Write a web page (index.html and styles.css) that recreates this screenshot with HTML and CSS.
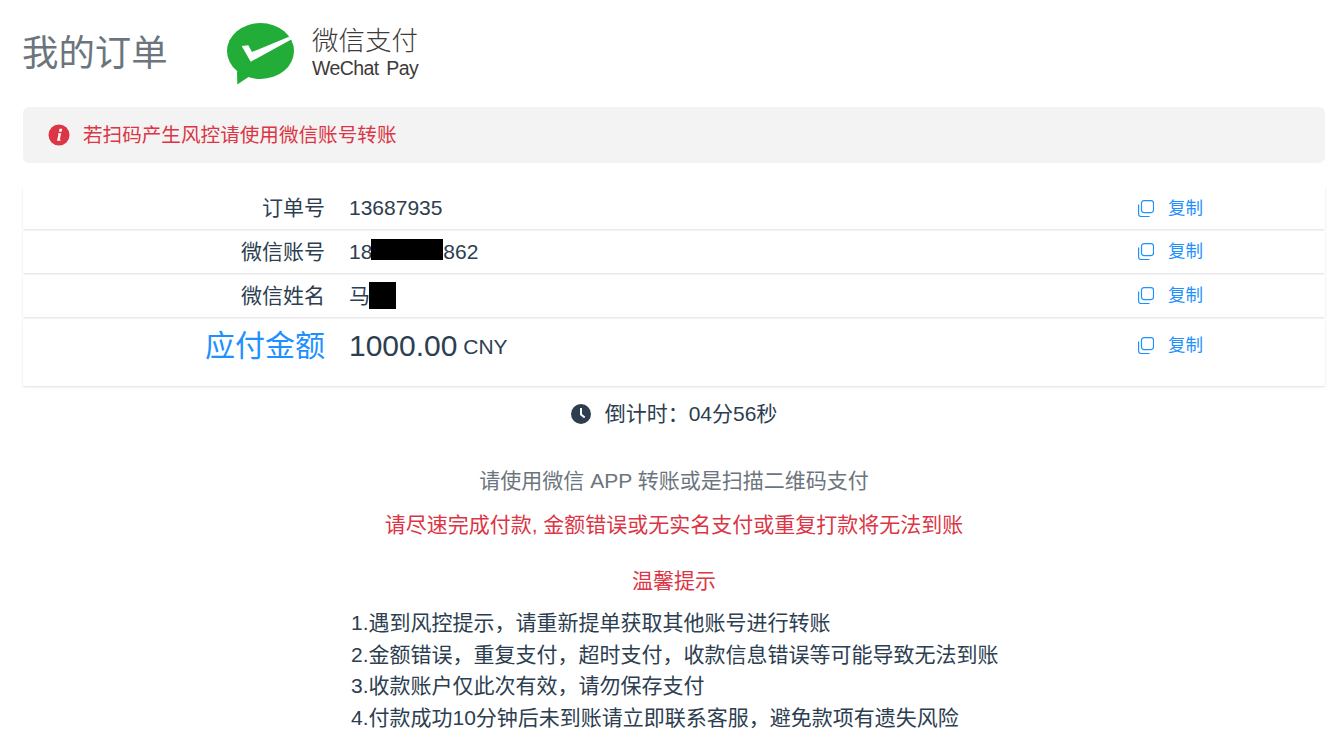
FILE: index.html
```html
<!DOCTYPE html>
<html lang="zh-CN">
<head>
<meta charset="utf-8">
<title>我的订单</title>
<link rel="stylesheet" href="styles.css">
</head>
<body>
<main class="page">
  <header class="head">
    <h1 class="title">我的订单</h1>
    <div class="brand">
      <svg class="brand-icon" viewBox="0 0 70 62" width="70" height="62" aria-hidden="true">
        <ellipse cx="34.500" cy="28" rx="33.500" ry="28" fill="#22ac38"/>
        <path d="M11 48l.3 13.500L24 53z" fill="#22ac38"/>
        <path d="M15.700 23l6.600-.7 3.700 6.700 37-15.300 2.700 2.600-41 22.400z" fill="#fff"/>
      </svg>
      <div class="brand-text">
        <span class="brand-cn">微信支付</span>
        <span class="brand-en">WeChat Pay</span>
      </div>
    </div>
  </header>

  <div class="alert">
    <svg class="alert-icon" viewBox="0 0 22 22" width="22" height="22" aria-hidden="true">
      <circle cx="11" cy="11" r="10.500" fill="#dc3545"/>
      <path d="M10.200 9.200h3l-1.500 6.300h1l-.3 1.300H9l1.500-6.300h-.6zM11.500 4.800h2.600l-.5 2.900H11z" fill="#fff"/>
    </svg>
    <span class="alert-text">若扫码产生风控请使用微信账号转账</span>
  </div>

  <section class="rows">
    <div class="row row-first">
      <div class="label">订单号</div>
      <div class="value">13687935</div>
      <a class="copy"><svg class="copy-icon" viewBox="0 0 16 17" width="16" height="17" aria-hidden="true"><rect x="3.500" y="0.600" width="12" height="12" rx="2.500"/><path d="M0.600 4.500v9.500a2.500 2.500 0 0 0 2.500 2.500h8.500"/></svg><span>复制</span></a>
    </div>
    <div class="row">
      <div class="label">微信账号</div>
      <div class="value">18<span class="mask mask-phone"></span>862</div>
      <a class="copy"><svg class="copy-icon" viewBox="0 0 16 17" width="16" height="17" aria-hidden="true"><rect x="3.500" y="0.600" width="12" height="12" rx="2.500"/><path d="M0.600 4.500v9.500a2.500 2.500 0 0 0 2.500 2.500h8.500"/></svg><span>复制</span></a>
    </div>
    <div class="row">
      <div class="label">微信姓名</div>
      <div class="value">马<span class="mask mask-name"></span></div>
      <a class="copy"><svg class="copy-icon" viewBox="0 0 16 17" width="16" height="17" aria-hidden="true"><rect x="3.500" y="0.600" width="12" height="12" rx="2.500"/><path d="M0.600 4.500v9.500a2.500 2.500 0 0 0 2.500 2.500h8.500"/></svg><span>复制</span></a>
    </div>
    <div class="row row-amount">
      <div class="label label-amount">应付金额</div>
      <div class="value value-amount">1000.00<span class="unit"> CNY</span></div>
      <a class="copy"><svg class="copy-icon" viewBox="0 0 16 17" width="16" height="17" aria-hidden="true"><rect x="3.500" y="0.600" width="12" height="12" rx="2.500"/><path d="M0.600 4.500v9.500a2.500 2.500 0 0 0 2.500 2.500h8.500"/></svg><span>复制</span></a>
    </div>
  </section>

  <div class="countdown">
    <svg class="clock" viewBox="0 0 20 20" width="20" height="20" aria-hidden="true">
      <circle cx="10" cy="10" r="10" fill="#2c3e50"/>
      <path d="M9 4h2v6l3.300 2.700-1.200 1.500L9 11z" fill="#fff"/>
    </svg>
    <span>倒计时：04分56秒</span>
  </div>

  <p class="hint">请使用微信 APP 转账或是扫描二维码支付</p>
  <p class="warn">请尽速完成付款, 金额错误或无实名支付或重复打款将无法到账</p>
  <p class="tips-title">温馨提示</p>
  <ul class="tips">
    <li>1.遇到风控提示，请重新提单获取其他账号进行转账</li>
    <li>2.金额错误，重复支付，超时支付，收款信息错误等可能导致无法到账</li>
    <li>3.收款账户仅此次有效，请勿保存支付</li>
    <li>4.付款成功10分钟后未到账请立即联系客服，避免款项有遗失风险</li>
  </ul>
</main>
</body>
</html>
```
FILE: styles.css
```css
* { box-sizing: border-box; }
html, body { margin: 0; height: 755px; overflow: hidden; background: #fff; }
body {
  font-family: "Liberation Sans", "Noto Sans CJK SC", sans-serif;
  font-size: 21px;
  line-height: 1.5;
  color: #2c3e50;
}
.page { padding: 0 14px 0 23px; }
.head { display: flex; align-items: center; height: 107px; }
.title {
  margin: 0 58px 0 -1px;
  font-size: 36.400px;
  font-weight: 400;
  line-height: 1.2;
  color: #6c757d;
  width: 146px;
  white-space: nowrap;
}
.brand { display: flex; align-items: center; gap: 16px; }
.brand-text { display: flex; flex-direction: column; color: #3e3a39; }
.brand-cn { font-size: 26.500px; font-weight: 300; line-height: 28px; white-space: nowrap; }
.brand-en { font-size: 19.500px; line-height: 26px; letter-spacing: -0.600px; word-spacing: 3px; white-space: nowrap; }
.alert {
  display: flex;
  align-items: center;
  gap: 13px;
  height: 56px;
  padding: 0 25px;
  background: #f3f3f3;
  border-radius: 6px;
  color: #dc3545;
  font-size: 19.600px;
}
.alert-text { padding-top: 2px; }
.rows { margin-top: 24px; }
.row {
  display: grid;
  grid-template-columns: 302px 765px 1fr;
  column-gap: 24px;
  align-items: center;
  height: 42px;
  margin-bottom: 2px;
  padding-bottom: 1px;
  background: #fff;
  box-shadow: 0 1px 2px rgba(0, 0, 0, 0.12);
}
.row-first { padding-bottom: 0; }
.row-amount { height: 67px; align-items: start; padding: 6px 0 0; margin-bottom: 0; }
.label { text-align: right; }
.label-amount { font-size: 30px; color: #1e90ff; line-height: 42px; }
.value { white-space: nowrap; }
.value-amount { font-size: 30px; line-height: 42px; }
.unit { font-size: 21px; vertical-align: 2px; }
.mask { display: inline-block; background: #000; margin-left: -1px; }
.mask-phone { width: 72px; height: 21px; vertical-align: -1px; }
.mask-name { width: 27px; height: 27px; vertical-align: -6px; }
.copy {
  display: flex;
  align-items: center;
  gap: 14px;
  font-size: 17.500px;
  color: #1e90ff;
}
.row-amount .copy { margin-top: 7px; }
.copy-icon { fill: none; stroke: #1e90ff; stroke-width: 1.200; flex: none; }
.countdown {
  display: flex;
  align-items: center;
  justify-content: center;
  gap: 14px;
  margin-top: 12px;
}
.hint, .warn, .tips-title { margin: 0; text-align: center; }
.hint { margin-top: 35px; color: #6c757d; }
.warn { margin-top: 13px; color: #dc3545; }
.tips-title { margin-top: 24px; color: #dc3545; }
.tips { list-style: none; margin: 11px 0 0; padding: 0 0 0 328px; }
.tips li { white-space: nowrap; line-height: 31.700px; }
```
